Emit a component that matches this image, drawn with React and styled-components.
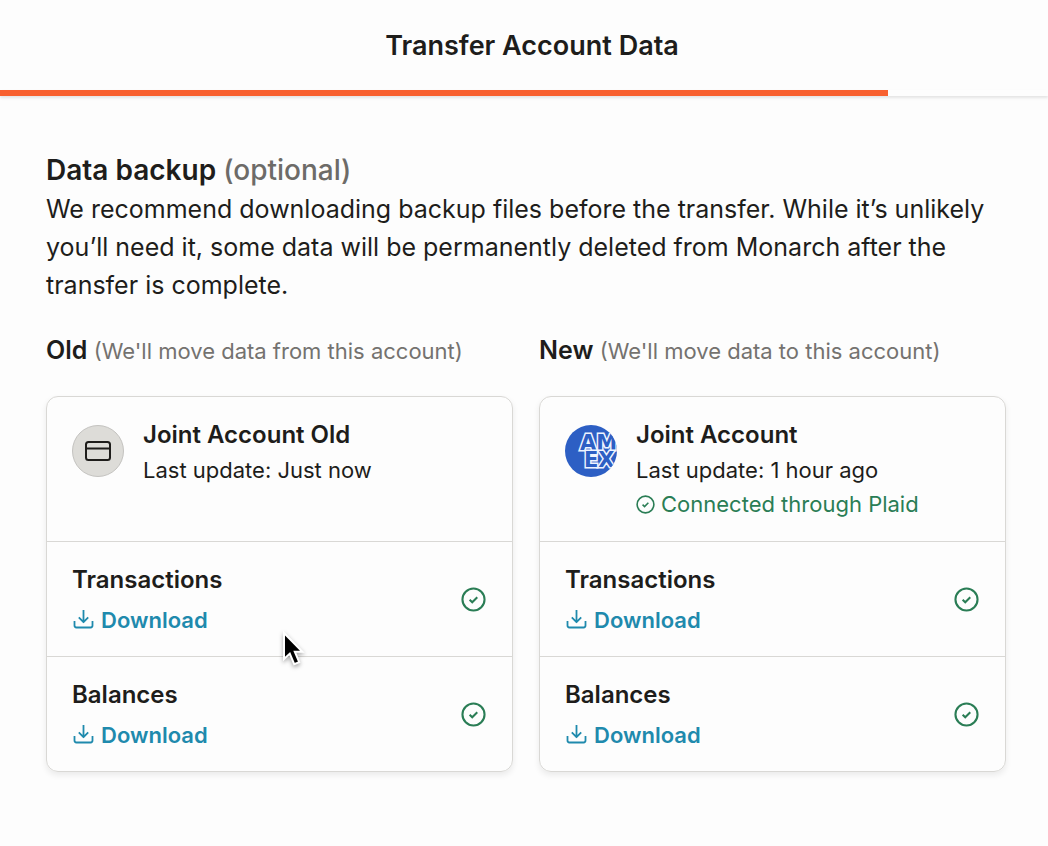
import React from "react";
import styled, { createGlobalStyle } from "styled-components";

const GlobalStyle = createGlobalStyle`
  * { box-sizing: border-box; }
  body {
    margin: 0;
    background: #fdfdfd;
    color: #1e1d1b;
    font-family: Inter, "Liberation Sans", sans-serif;
    font-size: 22px;
    line-height: 34px;
  }
  h1, h2, h3, h4, p { margin: 0; }
`;

const Page = styled.div`
  position: relative;
  min-height: 100vh;
`;

const Header = styled.header`
  padding: 27px 0 0 16px;
  height: 90px;
`;

const Title = styled.h1`
  font-size: 27px;
  line-height: 38px;
  font-weight: 600;
  text-align: center;
`;

const Track = styled.div`
  height: 6px;
  box-shadow: 0 2px 3px rgba(0, 0, 0, 0.1);
`;

const Progress = styled.div`
  height: 100%;
  background: #f8602f;
`;

const Main = styled.main`
  padding: 54px 42px 72px 46px;
`;

const Heading = styled.h2`
  font-size: 28px;
  line-height: 40px;
  font-weight: 600;
`;

const Optional = styled.span`
  color: #6d6b68;
  font-weight: 500;
`;

const Intro = styled.p`
  font-size: 25px;
  line-height: 38px;
`;

const Columns = styled.div`
  display: grid;
  grid-template-columns: 1fr 1fr;
  gap: 26px;
  margin-top: 27px;
`;

const ColumnTitle = styled.h3`
  font-size: 25px;
  line-height: 38px;
  font-weight: 600;
  margin-bottom: 26px;
  white-space: nowrap;
`;

const Hint = styled.span`
  font-size: 22px;
  font-weight: 400;
  color: #74726f;
`;

const Card = styled.article`
  border: 1px solid #d9d8d5;
  border-radius: 12px;
  box-shadow: 0 3px 6px rgba(0, 0, 0, 0.08);
`;

const Account = styled.div`
  display: flex;
  gap: 19px;
  min-height: 144px;
  padding: 20px 25px;
`;

const Avatar = styled.div`
  display: flex;
  align-items: center;
  justify-content: center;
  flex: none;
  width: 52px;
  height: 52px;
  margin-top: 8px;
  border-radius: 50%;
  overflow: hidden;
  background: ${(p) => (p.$plain ? "#dddcd8" : "#2d5fc4")};
  border: ${(p) => (p.$plain ? "1px solid #c4c3c0" : "0")};
`;

const ItemTitle = styled.h4`
  font-size: 24px;
  line-height: 36px;
  font-weight: 600;
`;

const Status = styled.p`
  display: flex;
  align-items: center;
  gap: 6px;
  color: #2a7d55;
`;

const Row = styled.div`
  display: flex;
  align-items: center;
  justify-content: space-between;
  min-height: 115px;
  padding: 0 26px 0 25px;
  border-top: 1px solid #d9d8d5;
`;

const DownloadLink = styled.a`
  display: flex;
  align-items: center;
  gap: 7px;
  margin-top: 5px;
  line-height: 34px;
  font-weight: 600;
  color: #1f8aad;
  text-decoration: none;
`;

const Pointer = styled.svg`
  position: absolute;
  left: 280px;
  top: 629px;
  filter: drop-shadow(0 2px 2px rgba(0, 0, 0, 0.35));
  pointer-events: none;
`;

function CheckCircle({ size, stroke }) {
  return (
    <svg width={size} height={size} viewBox="0 0 24 24" fill="none" stroke="#2a7d55" strokeWidth={stroke} aria-hidden="true">
      <circle cx="12" cy="12" r="10.6" />
      <path d="M8.3 12.2l2.5 2.4 4.8-4.8" />
    </svg>
  );
}

function DownloadIcon() {
  return (
    <svg width="22" height="22" viewBox="0 0 22 22" fill="none" stroke="#1f8aad" strokeWidth="1.8" strokeLinejoin="round" aria-hidden="true">
      <path d="M11.5 1v12M6.8 8.4l4.7 4.8 4.7-4.8M2.5 12v4.6a1.9 1.9 0 0 0 1.9 1.9h14.2a1.9 1.9 0 0 0 1.9-1.9V12" />
    </svg>
  );
}

function CardIcon() {
  return (
    <svg width="26" height="20" viewBox="0 0 26 20" fill="none" stroke="#1e1d1b" strokeWidth="2" aria-hidden="true">
      <rect x="1" y="1" width="24" height="18" rx="2.5" />
      <path d="M1 7.5h24" />
    </svg>
  );
}

function AmexLogo() {
  return (
    <svg width="52" height="52" viewBox="0 0 52 52" role="img" aria-label="American Express">
      <text
        fontFamily="DejaVu Sans, sans-serif"
        fontWeight="700"
        fontSize="21"
        fill="#2d5fc4"
        stroke="#eef4ff"
        strokeWidth="3"
        paintOrder="stroke"
      >
        <tspan x="15" y="25">AM</tspan>
        <tspan x="19" y="42">EX</tspan>
      </text>
    </svg>
  );
}

function Download({ title }) {
  return (
    <Row>
      <div>
        <ItemTitle>{title}</ItemTitle>
        <DownloadLink href="#download">
          <DownloadIcon />
          Download
        </DownloadLink>
      </div>
      <CheckCircle size={25} stroke={2} />
    </Row>
  );
}

function AccountColumn({ label, hint, name, updated, connected, plain, logo }) {
  return (
    <section>
      <ColumnTitle>
        {label} <Hint>{hint}</Hint>
      </ColumnTitle>
      <Card>
        <Account>
          <Avatar $plain={plain}>{logo}</Avatar>
          <div>
            <ItemTitle>{name}</ItemTitle>
            <p>Last update: {updated}</p>
            {connected && (
              <Status>
                <CheckCircle size={19} stroke={2} />
                {connected}
              </Status>
            )}
          </div>
        </Account>
        <Download title="Transactions" />
        <Download title="Balances" />
      </Card>
    </section>
  );
}

export default function App() {
  return (
    <Page>
      <GlobalStyle />
      <Header>
        <Title>Transfer Account Data</Title>
      </Header>
      <Track>
        <Progress style={{ width: "84.73%" }} />
      </Track>
      <Main>
        <Heading>
          Data backup <Optional>(optional)</Optional>
        </Heading>
        <Intro>
          We recommend downloading backup files before the transfer. While it’s unlikely you’ll need it,
          some data will be permanently deleted from Monarch after the transfer is complete.
        </Intro>
        <Columns>
          <AccountColumn
            label="Old"
            hint="(We'll move data from this account)"
            name="Joint Account Old"
            updated="Just now"
            plain
            logo={<CardIcon />}
          />
          <AccountColumn
            label="New"
            hint="(We'll move data to this account)"
            name="Joint Account"
            updated="1 hour ago"
            connected="Connected through Plaid"
            logo={<AmexLogo />}
          />
        </Columns>
      </Main>
      <Pointer width="26" height="42" viewBox="0 0 26 42" aria-hidden="true">
        <path
          d="M4 4v26l5.8-5.4 4.4 10.6 5-2.1-4.4-10.4h7.6z"
          fill="#000"
          stroke="#fff"
          strokeWidth="2"
        />
      </Pointer>
    </Page>
  );
}
